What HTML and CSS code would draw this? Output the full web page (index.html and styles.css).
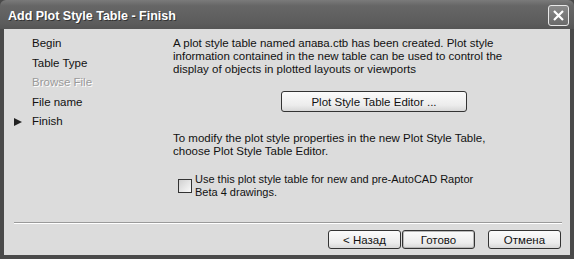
FILE: index.html
```html
<!DOCTYPE html>
<html lang="en">

<head>
    <meta charset="UTF-8">
    <title>Add Plot Style Table - Finish</title>
    <link rel="stylesheet" href="styles.css">
</head>

<body>
    <div class="window">
        <div class="titlebar">
            <span class="title">Add Plot Style Table - Finish</span>
            <span class="close">
                <svg width="13" height="13" viewBox="0 0 13 13">
                    <path d="M2 2 L11 11 M11 2 L2 11" stroke="#fff" stroke-width="2.2" />
                </svg>
            </span>
        </div>
        <div class="client">
            <div class="main">
                <ul class="steps">
                    <li>Begin</li>
                    <li>Table Type</li>
                    <li class="disabled">Browse File</li>
                    <li>File name</li>
                    <li class="current">Finish</li>
                </ul>
                <div class="page">
                    <p class="info">A plot style table named апава.ctb has been created. Plot style<br>
                        information contained in the new table can be used to control the<br>
                        display of objects in plotted layouts or viewports</p>
                    <div class="editor-row">
                        <button class="btn wide">Plot Style Table Editor ...</button>
                    </div>
                    <p class="info">To modify the plot style properties in the new Plot Style Table,<br>
                        choose Plot Style Table Editor.</p>
                    <label class="check">
                        <span class="box"></span>
                        <span>Use this plot style table for new and pre-AutoCAD Raptor<br>Beta 4 drawings.</span>
                    </label>
                </div>
            </div>
            <div class="separator"></div>
            <div class="buttons">
                <button class="btn">&lt; Назад</button>
                <button class="btn default">Готово</button>
                <button class="btn cancel">Отмена</button>
            </div>
        </div>
    </div>
</body>

</html>
```

FILE: styles.css
```css
/* reset */
html,
body {
    margin: 0;
    padding: 0;
}

body,
p,
ul,
li,
button {
    margin: 0;
    padding: 0;
}

body,
button {
    font-family: 'Liberation Sans', Arial, sans-serif;
    font-size: 11.5px;
}

ul {
    list-style: none;
}

/* window */
.window {
    width: 574px;
    height: 259px;
    background: #4a4a4a;
    display: flex;
    flex-direction: column;
    box-sizing: border-box;
    padding: 0 4px 4px;
}

.titlebar {
    height: 29px;
    flex-shrink: 0;
    margin: 0 -4px;
    padding: 0 5px 0 8px;
    display: flex;
    align-items: center;
    justify-content: space-between;
    background: linear-gradient(#7a7a7a, #666 20%, #5c5c5c 80%, #555);
    border-radius: 6px 6px 0 0;
}

.title {
    color: #fff;
    font-weight: bold;
    font-size: 12.5px;
    text-shadow: 1px 1px 0 #333;
    padding-top: 2px;
}

.close {
    width: 19px;
    height: 19px;
    border: 1px solid #e8e8e8;
    border-radius: 3px;
    background: linear-gradient(#8a8a8a, #6a6a6a);
    display: flex;
    align-items: center;
    justify-content: center;
    margin-top: 1px;
}

.client {
    flex: 1;
    background: #dcdcdc;
    display: flex;
    flex-direction: column;
}

.main {
    display: flex;
    height: 190px;
}

.steps {
    width: 169px;
    padding-top: 8px;
    padding-left: 28px;
    box-sizing: border-box;
    color: #111;
}

.steps li {
    height: 19.5px;
    line-height: 13px;
    position: relative;
}

.steps .disabled {
    color: #9a9a9a;
    text-shadow: 1px 1px 0 #fff;
}

.steps .current::before {
    content: '';
    position: absolute;
    left: -18px;
    top: 3px;
    border-left: 8px solid #222;
    border-top: 4px solid transparent;
    border-bottom: 4px solid transparent;
}

.page {
    padding-top: 8px;
    color: #111;
}

.info {
    line-height: 13px;
    white-space: nowrap;
}

.editor-row {
    padding: 15px 0 20px 108px;
}

.btn {
    height: 19px;
    width: 73px;
    border: 1px solid #333;
    border-radius: 3px;
    background: linear-gradient(#fbfbfb, #ececec 70%, #d8d8d8);
    color: #111;
    font-size: 11.5px;
    padding: 0;
}

.btn.wide {
    width: 186px;
    height: 21px;
}

.check {
    display: flex;
    align-items: flex-start;
    gap: 3px;
    margin-top: 15px;
    margin-left: 5px;
    line-height: 13px;
    white-space: nowrap;
    font-size: 11px;
}

.box {
    width: 12px;
    height: 12px;
    border: 1px solid #333;
    background: linear-gradient(135deg, #d0d0d0, #fafafa);
    margin-top: 6px;
    flex-shrink: 0;
}

.separator {
    margin: 3px 8px 0 10px;
    height: 1px;
    background: #9a9a9a;
    border-bottom: 1px solid #fff;
}

.buttons {
    display: flex;
    justify-content: flex-end;
    padding: 6px 9px 0 0;
}

.btn.default {
    margin-left: 1px;
    box-shadow: inset 0 0 0 1px #b8b8b8;
}

.btn.cancel {
    margin-left: 13px;
}
```
